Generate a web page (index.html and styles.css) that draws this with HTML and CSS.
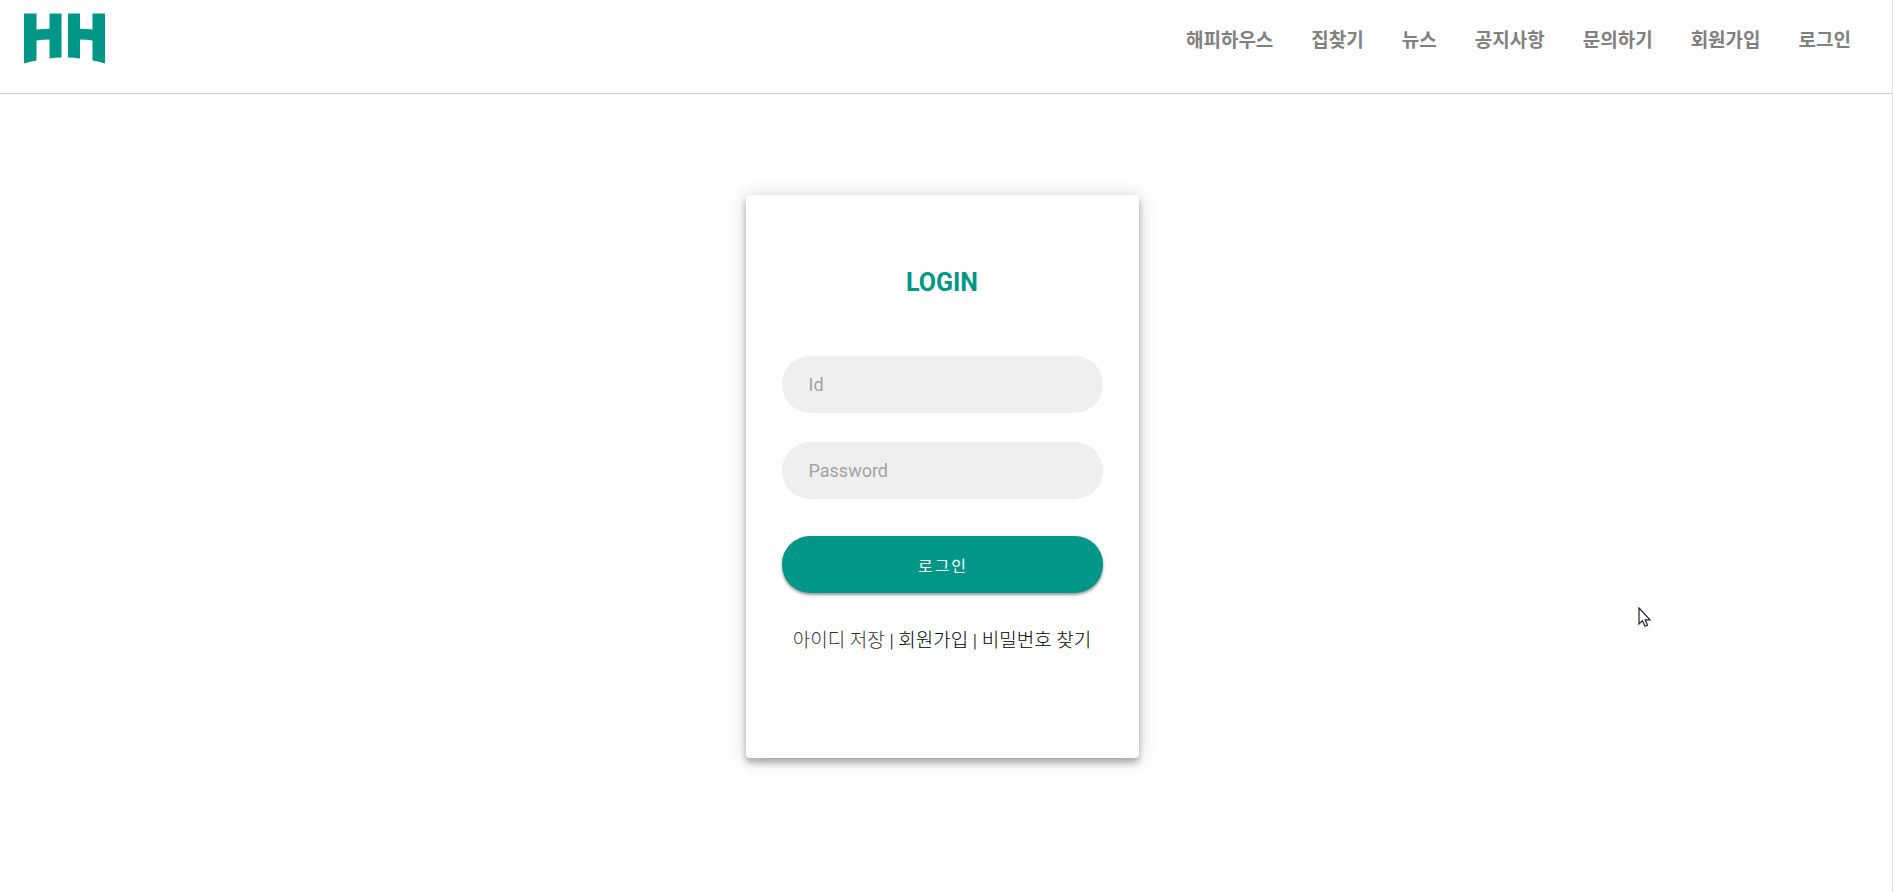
FILE: index.html
```html
<!DOCTYPE html>
<html lang="ko">
<head>
<meta charset="utf-8">
<meta name="viewport" content="width=device-width, initial-scale=1">
<title>해피하우스</title>
<link rel="stylesheet" href="styles.css">
</head>
<body>
<header class="header">
  <a class="logo" href="#" aria-label="해피하우스 홈">
    <svg width="82" height="51" viewBox="0 0 82 51" fill="#009688" aria-hidden="true">
      <path d="M0 .5H12.5V16.5Q19 15.8 25.500 15.800V.5H37.500V44.500Q31 44.600 25.500 45.500V26.500Q19 26.600 12.500 27.500V47.500Q6 48.700 0 50.500Z"/>
      <path d="M44 .5H56V15.800Q62.500 15.800 68.500 16.500V.5H81V50.500Q74.500 48.500 68.500 47.500V27.500Q62.500 26.600 56 26.500V45.500Q49.500 44.600 44 44.500Z"/>
    </svg>
  </a>
  <nav class="nav">
    <a href="#">해피하우스</a>
    <a href="#">집찾기</a>
    <a href="#">뉴스</a>
    <a href="#">공지사항</a>
    <a href="#">문의하기</a>
    <a href="#">회원가입</a>
    <a href="#">로그인</a>
  </nav>
</header>
<main class="main">
  <form class="card">
    <h1 class="title">LOGIN</h1>
    <input class="field" type="text" placeholder="Id" aria-label="Id">
    <input class="field" type="password" placeholder="Password" aria-label="Password">
    <button class="submit" type="button">로그인</button>
    <p class="links"><a class="save" href="#">아이디 저장</a> | <a href="#">회원가입</a> | <a href="#">비밀번호 찾기</a></p>
  </form>
</main>
<svg class="cursor" width="14" height="21" viewBox="0 0 14 21" aria-hidden="true">
  <path d="M1 1V17L4.500 13.800L7 19.300L9.500 18.200L7.200 12.800H12Z" fill="#fff" stroke="#1c2430" stroke-width="1.200"/>
</svg>
</body>
</html>
```
FILE: styles.css
```css
* {
  box-sizing: border-box;
}

body {
  margin: 0;
  min-height: 100vh;
  border-right: 1px solid #e4e4e4;
  background: #fefefe;
  color: #000;
  font-family: Roboto, "Noto Sans CJK KR", sans-serif;
}

a {
  color: inherit;
  text-decoration: none;
}

.header {
  display: flex;
  justify-content: space-between;
  align-items: flex-start;
  height: 94px;
  padding: 13px 41px 0 24px;
  border-bottom: 1px solid #d0d0d0;
}

.logo svg {
  display: block;
}

.nav {
  display: flex;
  gap: 38px;
  padding-top: 13px;
  color: #808080;
  font-size: 19px;
  font-weight: 700;
  line-height: 30px;
}

.main {
  display: flex;
  justify-content: center;
  padding: 101px 8px 0 0;
}

.card {
  display: flex;
  flex-direction: column;
  width: 393px;
  padding: 72px 36px 101px;
  border-radius: 4px;
  background: #fefefe;
  box-shadow: 0 1px 18px rgba(0, 0, 0, 0.18), 0 5px 6px rgba(0, 0, 0, 0.26);
}

.title {
  margin: 0 0 57px;
  color: #009688;
  font-size: 25px;
  font-weight: 700;
  line-height: 32px;
  text-align: center;
}

.field {
  width: 100%;
  height: 57px;
  margin: 0 0 29px;
  padding: 0 27px;
  border: 0;
  border-radius: 28px;
  background: #efefef;
  color: #000;
  font-family: inherit;
  font-size: 18px;
}

.field::placeholder {
  color: #a4a4a4;
  opacity: 1;
}

.submit {
  height: 57px;
  margin-top: 8px;
  padding: 0 0 0 2px;
  border: 0;
  border-radius: 28px;
  background: #009688;
  box-shadow: 0 2px 3px rgba(0, 0, 0, 0.4);
  color: #fff;
  font-family: inherit;
  font-size: 16px;
  letter-spacing: 2px;
}

.links {
  margin: 32px 0 0;
  font-size: 19px;
  font-weight: 300;
  line-height: 32px;
  text-align: center;
  white-space: nowrap;
}

.save {
  color: #333;
}

.cursor {
  position: absolute;
  left: 1638px;
  top: 607px;
}
```
